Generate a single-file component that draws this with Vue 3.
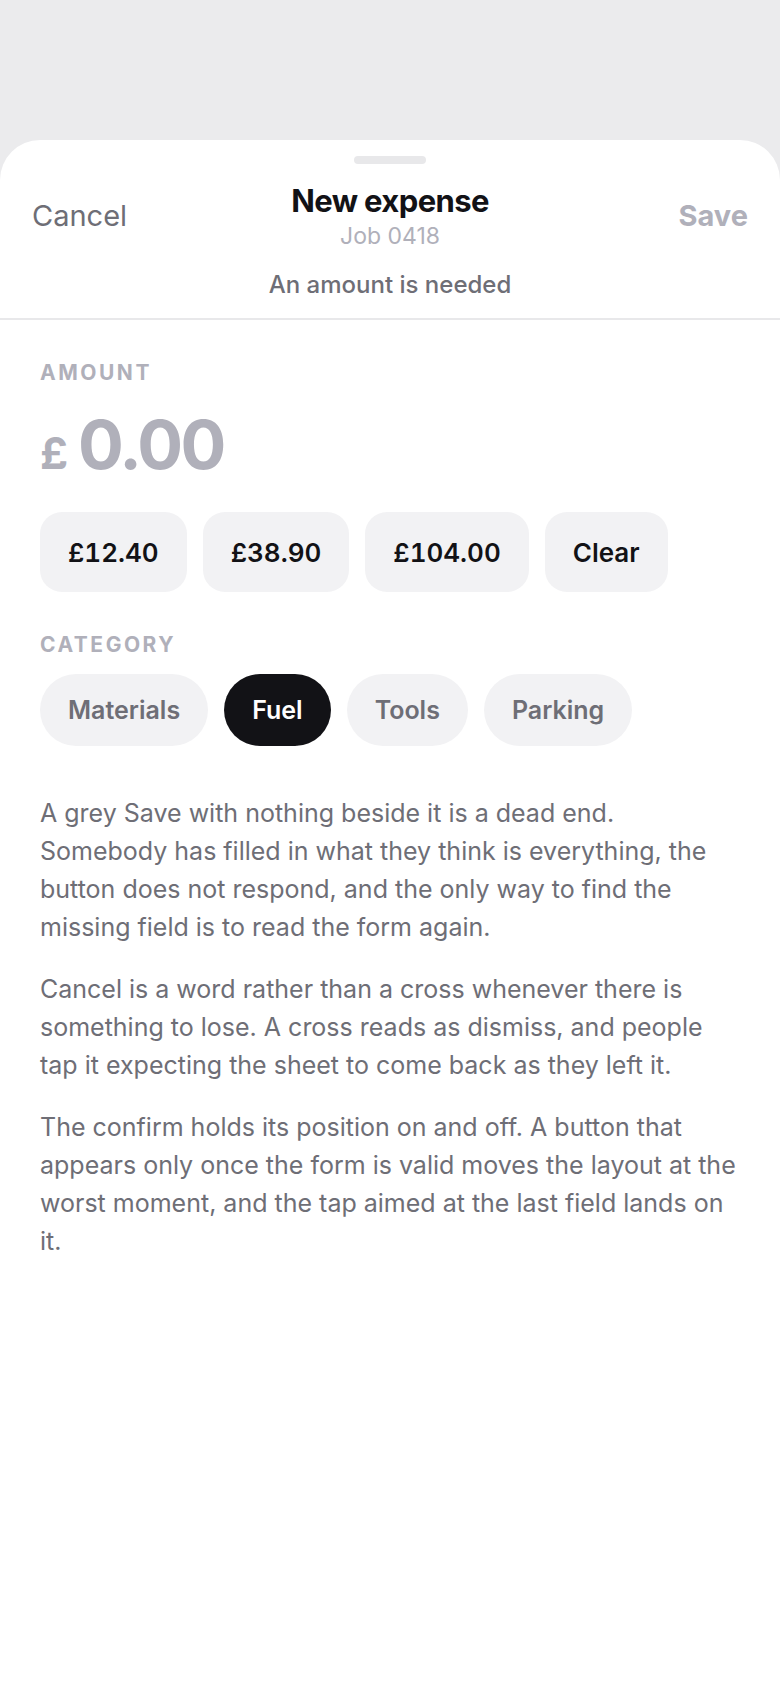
<template>
  <div class="screen">
    <main class="sheet">
      <header class="head">
        <div class="handle"></div>
        <div class="bar">
          <button type="button" class="action cancel" @click="reset">Cancel</button>
          <div class="titles">
            <h1>New expense</h1>
            <p class="job">Job 0418</p>
          </div>
          <button type="button" class="action save" :class="{ ready: isValid }" :aria-disabled="!isValid">Save</button>
        </div>
        <p class="reason" role="status">{{ isValid ? 'Ready to save' : 'An amount is needed' }}</p>
      </header>

      <div class="body">
        <label class="label" for="amount">AMOUNT</label>
        <div class="amount" :class="{ filled: isValid }">
          <span class="currency">£</span>
          <input id="amount" v-model="amount" type="text" inputmode="decimal" autocomplete="off" />
        </div>
        <div class="row">
          <button v-for="p in presets" :key="p" type="button" class="preset" @click="amount = p">£{{ p }}</button>
          <button type="button" class="preset" @click="amount = '0.00'">Clear</button>
        </div>

        <h2 id="category" class="label category-label">CATEGORY</h2>
        <div class="row" role="group" aria-labelledby="category">
          <button
            v-for="c in categories"
            :key="c"
            type="button"
            class="pill"
            :class="{ active: c === category }"
            :aria-pressed="c === category"
            @click="category = c"
          >{{ c }}</button>
        </div>

        <div class="notes">
          <p v-for="(n, i) in notes" :key="i">{{ n }}</p>
        </div>
      </div>
    </main>
  </div>
</template>

<script setup>
import { ref, computed } from 'vue'

const presets = ['12.40', '38.90', '104.00']
const categories = ['Materials', 'Fuel', 'Tools', 'Parking']
const notes = [
  'A grey Save with nothing beside it is a dead end. Somebody has filled in what they think is everything, the button does not respond, and the only way to find the missing field is to read the form again.',
  'Cancel is a word rather than a cross whenever there is something to lose. A cross reads as dismiss, and people tap it expecting the sheet to come back as they left it.',
  'The confirm holds its position on and off. A button that appears only once the form is valid moves the layout at the worst moment, and the tap aimed at the last field lands on it.'
]

const amount = ref('0.00')
const category = ref('Fuel')
const isValid = computed(() => Number(amount.value) > 0)

function reset() {
  amount.value = '0.00'
  category.value = 'Fuel'
}
</script>

<style>
body { margin: 0; background: #ebebed; }
</style>

<style scoped>
* { box-sizing: border-box; }
h1, h2, p { margin: 0; }
button, input { font: inherit; color: inherit; border: 0; background: none; padding: 0; margin: 0; }
button { cursor: pointer; }

.screen { display: flex; flex-direction: column; min-height: 100vh; padding-top: 140px; background: #ebebed; font-family: Inter, "Liberation Sans", sans-serif; color: #121216; }
.sheet { flex: 1; background: #fff; border-radius: 40px 40px 0 0; }

.head { padding: 16px 32px 18px; border-bottom: 2px solid #e8e8ea; }
.handle { width: 72px; height: 8px; margin: 0 auto; border-radius: 4px; background: #e8e8ea; }
.bar { display: grid; grid-template-columns: 1fr auto 1fr; align-items: center; padding-top: 16px; }
.action { height: 72px; font-size: 29px; line-height: 36px; }
.cancel { justify-self: start; color: #6e6e76; }
.save { justify-self: end; font-weight: 700; color: #b0b0ba; }
.save.ready { color: #121216; }
.titles { text-align: center; }
h1 { font-size: 31px; line-height: 40px; font-weight: 700; letter-spacing: -0.02em; }
.job { font-size: 23px; line-height: 30px; color: #b0b0ba; }
.reason { padding-top: 18px; font-size: 24px; line-height: 30px; font-weight: 500; text-align: center; color: #6e6e76; }

.body { padding: 40px; }
.label { display: block; font-size: 21px; line-height: 26px; font-weight: 700; letter-spacing: 0.12em; color: #b0b0ba; }
.amount { display: flex; align-items: baseline; gap: 10px; padding: 18px 0 28px; font-weight: 700; color: #b0b0ba; }
.amount.filled { color: #121216; }
.currency { font-size: 44px; }
.amount input { flex: 1; min-width: 0; height: 80px; font-size: 68px; line-height: 80px; letter-spacing: -0.04em; outline: none; }

.row { display: flex; flex-wrap: wrap; gap: 16px; }
.preset { height: 80px; padding: 0 28px; border-radius: 22px; background: #f2f2f4; font-size: 26px; font-weight: 600; font-variant-numeric: tabular-nums; }
.category-label { padding: 40px 0 16px; }
.pill { height: 72px; padding: 0 28px; border-radius: 36px; background: #f2f2f4; font-size: 25px; font-weight: 600; color: #6e6e76; }
.pill.active { background: #121216; color: #fff; }

.notes { display: flex; flex-direction: column; gap: 24px; padding-top: 48px; font-size: 25px; line-height: 38px; color: #6e6e76; }
</style>
